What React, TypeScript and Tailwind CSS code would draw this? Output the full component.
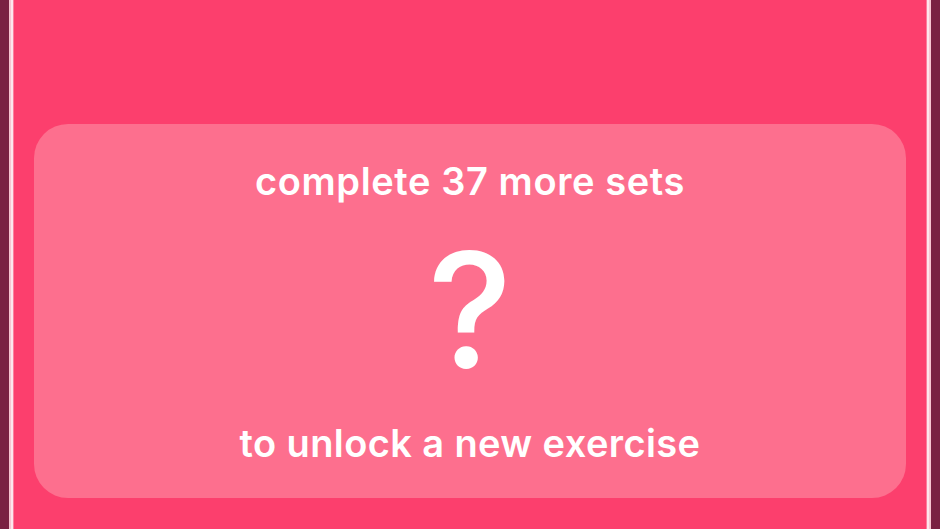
export default function App() {
  return (
    <div className="w-[940px] h-[529px] flex overflow-hidden bg-[#fc3f6d]" style={{ fontFamily: "Inter, 'Open Sans', sans-serif" }}>
      {/* left frame edge */}
      <div className="w-[9px] bg-[#7a2142]" />
      <div className="w-[2px] bg-[#f7c4d0]" />
      <div className="w-[2px] bg-[#fde6ec]" />
      <div className="w-[1px] bg-[#fd7e9c]" />

      {/* main */}
      <div className="flex-1 flex flex-col px-[20px] pt-[124px]">
        <div className="h-[374px] rounded-[34px] bg-[#fd6f8e] flex flex-col items-center text-white">
          <p className="mt-[38px] text-[38px] font-semibold tracking-[0.6px] leading-none">complete 37 more sets</p>
          <p className="mt-[50px] text-[160px] font-medium leading-[120px]">?</p>
          <p className="mt-[54px] text-[38px] font-semibold tracking-[0.4px] leading-none">to unlock a new exercise</p>
        </div>
      </div>

      {/* right frame edge */}
      <div className="w-[1px] bg-[#fd7e9c]" />
      <div className="w-[2px] bg-[#fde6ec]" />
      <div className="w-[2px] bg-[#f7c4d0]" />
      <div className="w-[9px] bg-[#7a2142]" />
    </div>
  );
}
